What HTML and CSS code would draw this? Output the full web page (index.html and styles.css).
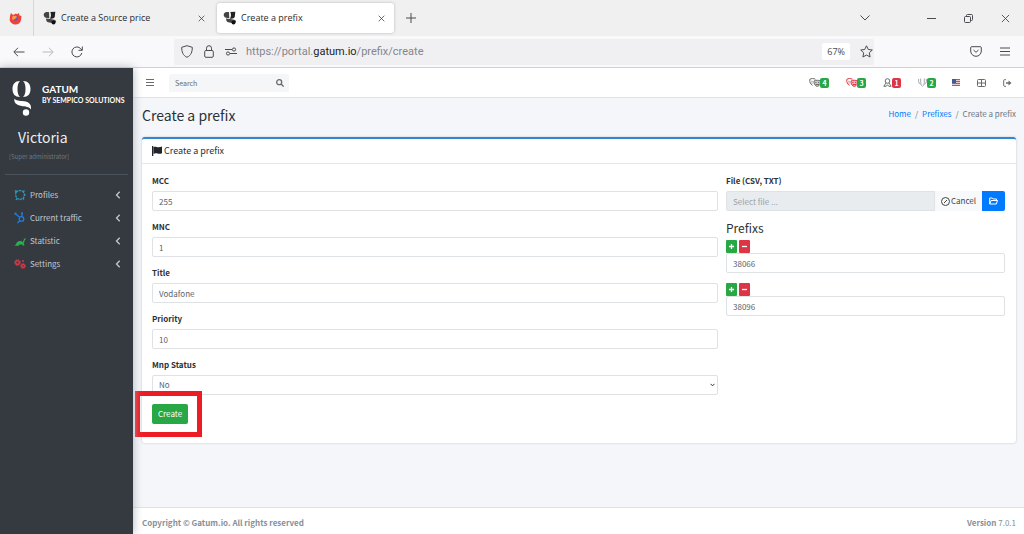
FILE: index.html
```html
<!DOCTYPE html>
<html lang="en">
<head>
<meta charset="utf-8">
<title>Create a prefix</title>
<link rel="stylesheet" href="styles.css">
</head>
<body>
<svg class="defs" aria-hidden="true">
  <symbol id="gmark" viewBox="0 0 20 36">
    <path d="M8 1C3 1 0.500 4 0.500 9s2.500 8 7.500 8C6 15 5.500 12.500 5.500 9S6 3 8 1z"/>
    <path d="M11 1c2 2 2.500 4.500 2.500 8s-.5 6-2.500 8c5 0 7.500-3 7.500-8S16 1 11 1z"/>
    <path d="M2.500 18.500c1 2 5 2.300 9.500 2.800 5 .7 7.500 3 7 8.200-2-3-5.500-2.800-9.500-3.500-5-.9-8-3.500-7-7.500z"/>
    <circle cx="14" cy="32.500" r="3.200"/>
  </symbol>
  <symbol id="favicon" viewBox="0 0 14 14">
    <path d="M.8 3C1.500 1 4 .8 6 1.200L6.300 7C3 7.400 .3 6.500.8 3z" fill="#444"/><path d="M7.300 1l5-.2-.5 5c-1 2-3 2.200-5 1.700 1.500-1.500 1.500-4 .5-6.500z" fill="#222"/>
    <path d="M3.300 7.200c3 1.300 8.200.2 9.900 3-.5 2.500-5 1.700-8 1-1.700-.5-2.400-2-1.900-4z" fill="#444"/><circle cx="10.500" cy="11.500" r="2" fill="#111"/>
  </symbol>
  <symbol id="masks" viewBox="0 0 12 9">
    <path d="M6.500 1.300C5 .3 2 .3 .8 1.300c-.3 3 .6 5 2.800 6M2.500 3.300h1M2.500 5h1"/>
    <path d="M5 3c2-1 4.500-1 6.500 0 .3 2.700-.8 4.800-3.200 5.500C5.800 7.800 4.700 5.700 5 3z" fill="currentColor" fill-opacity=".35"/><path d="M6.300 4.500h1.200M9 4.500h1.200M6.500 6.500h3.500"/>
  </symbol>
  <symbol id="x" viewBox="0 0 10 10"><path d="M1 1l8 8M9 1L1 9"/></symbol>
  <symbol id="left" viewBox="0 0 6 8"><path d="M4.700 .8L1.500 4l3.200 3.200"/></symbol>
</svg>

<header class="browser">
  <div class="tabs">
    <div class="tab-pin">
      <svg width="13" height="13" viewBox="0 0 13 13"><path d="M1 4l1-3 2 2 3-1.500 1 .8L10 1l.5 2.500L12.500 4 12 8c-.5 3-3 4.500-5.500 4.500S1 10.500.7 8z" fill="#f0413a"/><circle cx="6.300" cy="6" r="2.800" fill="#6d5bb0"/><path d="M3 5c1-1.500 4-1.800 5 0L6 7 3.500 8z" fill="#ff9a3c"/></svg>
    </div>
    <div class="tab">
      <svg class="fav"><use href="#favicon"/></svg><span>Create a Source price</span>
      <button class="ghost" aria-label="Close tab"><svg class="line i7"><use href="#x"/></svg></button>
    </div>
    <div class="tab active">
      <svg class="fav"><use href="#favicon"/></svg><span>Create a prefix</span>
      <button class="ghost" aria-label="Close tab"><svg class="line i7"><use href="#x"/></svg></button>
    </div>
    <button class="ghost new-tab" aria-label="New tab"><svg class="line" width="10" height="10" viewBox="0 0 10 10"><path d="M5 0v10M0 5h10"/></svg></button>
    <div class="window-controls">
      <button class="ghost list" aria-label="List tabs"><svg class="line" width="10" height="6" viewBox="0 0 10 6"><path d="M.5 .5L5 5 9.500 .5"/></svg></button>
      <button class="ghost" aria-label="Minimize"><svg class="line" width="9" height="9" viewBox="0 0 9 9"><path d="M0 4.500h9"/></svg></button>
      <button class="ghost" aria-label="Restore"><svg class="line" width="9" height="9" viewBox="0 0 9 9"><rect x=".5" y="2.500" width="6" height="6" rx="1"/><path d="M2.500 2.500V1.500q0-1 1-1h4q1 0 1 1v4q0 1-1 1h-1"/></svg></button>
      <button class="ghost" aria-label="Close"><svg class="line i9"><use href="#x"/></svg></button>
    </div>
  </div>
  <div class="toolbar">
    <div class="nav">
      <button class="ghost" aria-label="Back"><svg class="line" width="12" height="10" viewBox="0 0 12 10"><path d="M11.500 5H1M5 .8L.8 5 5 9.200"/></svg></button>
      <button class="ghost faded" aria-label="Forward"><svg class="line" width="12" height="10" viewBox="0 0 12 10"><path d="M.5 5H11M7 .8L11.200 5 7 9.200"/></svg></button>
      <button class="ghost" aria-label="Reload"><svg class="line" width="12" height="12" viewBox="0 0 12 12"><path d="M10.800 7A5 5 0 1 1 9.800 2.800L11 4M11.300 .5V4.300H7.500"/></svg></button>
    </div>
    <div class="address">
      <svg class="line" width="12" height="13" viewBox="0 0 12 13"><path d="M6 .7L11.300 2.300C11.300 7 10 10.500 6 12.300 2 10.500.7 7 .7 2.300z"/></svg>
      <svg class="line" width="10" height="13" viewBox="0 0 10 13"><rect x=".7" y="5.500" width="8.600" height="6.800" rx="1.200"/><path d="M2.500 5.500V3.200a2.500 2.500 0 0 1 5 0v2.300"/></svg>
      <svg class="line" width="12" height="9" viewBox="0 0 12 9"><path d="M0 2.500h7M5 6.500h7"/><circle cx="9" cy="2.500" r="1.600"/><circle cx="3" cy="6.500" r="1.600"/></svg>
      <span class="url">https://portal.<b>gatum.io</b>/prefix/create</span>
      <button class="zoom">67%</button>
      <svg class="line" width="13" height="13" viewBox="0 0 13 13"><path d="M6.500 .8l1.800 3.700 4 .5-3 2.800.8 4.200-3.600-2-3.600 2 .8-4.200-3-2.800 4-.5z"/></svg>
    </div>
    <div class="tools">
      <svg class="line" width="12" height="11" viewBox="0 0 12 11"><path d="M1.700 .7h8.600q1 0 1 1V5a5.300 5.300 0 0 1-10.600 0V1.700q0-1 1-1zM3.500 4L6 6.300 8.500 4"/></svg>
      <svg class="line" width="10" height="9" viewBox="0 0 10 9"><path d="M0 1h10M0 4.500h10M0 8h10"/></svg>
    </div>
  </div>
</header>

<div class="app">
  <aside class="sidebar">
    <a class="brand" href="#">
      <svg class="logo"><use href="#gmark"/></svg>
      <span class="brand-text"><strong>GATUM</strong><small>BY SEMPICO SOLUTIONS</small></span>
    </a>
    <div class="user"><a href="#">Victoria</a><small>[Super administrator]</small></div>
    <nav class="menu">
      <a href="#"><svg class="mi" viewBox="0 0 12 12" fill="none" stroke="#2b9bc0" stroke-width="1.300"><path d="M2 2.500L6 1.500l3 1 1.500 3L9.500 9 6 10.500 3 9.500 1.500 6z" stroke-dasharray="2.500 .7"/><path d="M1 1.500l2 2M10.500 1.500L9 3M11.500 6H10M9 9.500l1 1M3 9.500L2 11"/></svg><span>Profiles</span><svg class="line bold caret"><use href="#left"/></svg></a>
      <a href="#"><svg class="mi" viewBox="0 0 12 12" fill="none" stroke="#1c7fe0" stroke-width="1.300"><circle cx="7.500" cy="7" r="2.300"/><path d="M1 1.500l5 4M8 1v3.500M5.800 8.800L3.500 11"/><circle cx="1.500" cy="1.700" r=".5"/><circle cx="8" cy="1.300" r=".5"/></svg><span>Current traffic</span><svg class="line bold caret"><use href="#left"/></svg></a>
      <a href="#"><svg class="mi" viewBox="0 0 12 12" fill="#28b04c"><path d="M.5 10.800C2 10 2 7.500 4.500 6.300c1.800-.8 3.500-.2 4.300 1L10 4l1.200-1 .5 1.600-1 .7-1 3.700 1 1.300-1.500.5-1.200-1.300H5.500l-1 1.300z"/></svg><span>Statistic</span><svg class="line bold caret"><use href="#left"/></svg></a>
      <a href="#"><svg class="mi" viewBox="0 0 12 12" fill="none" stroke="#dc3545"><circle cx="3.500" cy="4.500" r="1.800" stroke-width="1.500"/><circle cx="3.500" cy="4.500" r="3" stroke-dasharray="1.200 1.150"/><circle cx="9" cy="8" r="1.500" stroke-width="1.400"/><circle cx="9" cy="8" r="2.500" stroke-dasharray="1 .960"/><circle cx="9" cy="3" r=".7"/></svg><span>Settings</span><svg class="line bold caret"><use href="#left"/></svg></a>
    </nav>
  </aside>

  <div class="page">
    <div class="topbar">
      <button class="ghost" aria-label="Toggle menu"><svg class="line" width="8" height="7" viewBox="0 0 8 7"><path d="M0 .5h8M0 3.500h8M0 6.500h8"/></svg></button>
      <form class="search">
        <input type="search" placeholder="Search" aria-label="Search">
        <button class="ghost" type="button" aria-label="Search"><svg class="line bold" width="8" height="8" viewBox="0 0 8 8"><circle cx="3.200" cy="3.200" r="2.500"/><path d="M5 5l2.600 2.600"/></svg></button>
      </form>
      <div class="status">
        <a href="#" aria-label="Accounts"><svg class="line si"><use href="#masks"/></svg><span class="badge">4</span></a>
        <a href="#" class="danger" aria-label="Errors"><svg class="line si"><use href="#masks"/></svg><span class="badge">3</span></a>
        <a href="#" aria-label="Users"><svg class="line si narrow" viewBox="0 0 9 9"><circle cx="4.500" cy="3" r="2.300"/><path d="M3 5L.8 8.300h2.400l1.300-1.500 1.300 1.500h2.400L6 5"/></svg><span class="badge red">1</span></a>
        <a href="#" aria-label="Routes"><svg class="line si narrow light" viewBox="0 0 9 9"><path d="M.6 1v2.500q0 2 2 2.500M2.700 .5v4q0 3 1.800 3.700 1.800-.7 1.800-3.700v-4M8.400 1v2.500q0 2-2 2.500"/></svg><span class="badge">2</span></a>
        <a href="#" class="flag" aria-label="Language"><svg width="8" height="7" viewBox="0 0 8 7"><path fill="#e9c9cd" d="M0 0h8v7H0z"/><path stroke="#c8505c" d="M0 .5h8M0 2.500h8M0 4.500h8M0 6.500h8"/><path fill="#3d5a99" d="M0 0h4v4H0z"/></svg></a>
        <a href="#" aria-label="Apps"><svg class="line" width="9" height="8" viewBox="0 0 9 8"><rect x=".5" y=".5" width="8" height="7" rx="1"/><path d="M4.500 0v8M0 4h9"/></svg></a>
        <a href="#" aria-label="Sign out"><svg class="line" width="9" height="8" viewBox="0 0 9 8"><path d="M3 .7H1.500q-.8 0-.8.8v5q0 .8.8.8H3"/><path d="M3 3.300h2.500V1.500L8.500 4 5.500 6.500V4.700H3z" fill="currentColor" stroke="none"/></svg></a>
      </div>
    </div>

    <main class="content">
      <div class="title-row">
        <h1>Create a prefix</h1>
        <nav class="crumbs"><a href="#">Home</a><i>/</i><a href="#">Prefixes</a><i>/</i><span>Create a prefix</span></nav>
      </div>
      <section class="card">
        <h2><svg width="10" height="10" viewBox="0 0 10 10"><path d="M0 0h1.300v10H0zM1.600 1c2-1 3.400.6 5 .3C8 1.200 9 .7 10 .4v6.800c-1.500.8-3 .8-4.500.3s-2.500-.4-3.900.2z" fill="#212529"/></svg>Create a prefix</h2>
        <form class="grid">
          <div class="col">
            <div class="field"><label for="mcc">MCC</label><input class="control" id="mcc" value="255"></div>
            <div class="field"><label for="mnc">MNC</label><input class="control" id="mnc" value="1"></div>
            <div class="field"><label for="title">Title</label><input class="control" id="title" value="Vodafone"></div>
            <div class="field"><label for="priority">Priority</label><input class="control" id="priority" value="10"></div>
            <div class="field"><label for="mnp">Mnp Status</label>
              <div class="select"><select class="control" id="mnp"><option>No</option><option>Yes</option></select><svg class="line" width="5" height="4" viewBox="0 0 5 4"><path d="M.5 .8l2 2 2-2"/></svg></div></div>
            <div class="submit"><button class="create" type="button">Create</button></div>
          </div>
          <div class="col">
            <div class="field"><label for="file">File (CSV, TXT)</label>
              <div class="file">
                <input class="control" id="file" placeholder="Select file ..." readonly>
                <button type="button" class="cancel"><svg class="line" width="9" height="9" viewBox="0 0 9 9"><circle cx="4.500" cy="4.500" r="4"/><path d="M3 6l3-3"/></svg>Cancel</button>
                <button type="button" class="browse" aria-label="Browse"><svg class="line" width="9" height="8" viewBox="0 0 9 8"><path d="M.7 7V1h2.500l1 1h3.300v1.500M.7 7l1.300-3.500h6.500L7.300 7z"/></svg></button>
              </div></div>
            <h3>Prefixs</h3>
            <div class="prefix">
              <div class="pm"><button type="button" class="add" aria-label="Add"><svg class="line bold" width="5" height="5" viewBox="0 0 5 5"><path d="M2.500 0v5M0 2.500h5"/></svg></button><button type="button" class="remove" aria-label="Remove"><svg class="line bold" width="5" height="5" viewBox="0 0 5 5"><path d="M0 2.500h5"/></svg></button></div>
              <input class="control" aria-label="Prefix 1" value="38066">
            </div>
            <div class="prefix">
              <div class="pm"><button type="button" class="add" aria-label="Add"><svg class="line bold" width="5" height="5" viewBox="0 0 5 5"><path d="M2.500 0v5M0 2.500h5"/></svg></button><button type="button" class="remove" aria-label="Remove"><svg class="line bold" width="5" height="5" viewBox="0 0 5 5"><path d="M0 2.500h5"/></svg></button></div>
              <input class="control" aria-label="Prefix 2" value="38096">
            </div>
          </div>
        </form>
      </section>
    </main>
    <footer class="footer"><strong>Copyright © Gatum.io. All rights reserved</strong><span><b>Version</b> 7.0.1</span></footer>
  </div>
</div>
</body>
</html>
```

FILE: styles.css
```css
* { box-sizing: border-box; }
body {
  margin: 0; min-height: 100vh; display: flex; flex-direction: column;
  font: 8px/12px "Noto Sans CJK SC", "Open Sans", sans-serif; color: #2c3136;
}
button, input, select { font: inherit; color: inherit; margin: 0; }
button { cursor: pointer; }
a { color: inherit; text-decoration: none; }
svg { flex: none; display: block; }
.defs { position: absolute; width: 0; height: 0; }
.line { fill: none; stroke: currentColor; stroke-width: 1; }
.bold { stroke-width: 1.3; }
.ghost { border: 0; background: none; padding: 0; display: grid; place-items: center; }
.i7 { width: 7px; height: 7px; }
.i9 { width: 9px; height: 9px; }

/* Browser frame */
.browser { font-family: "Open Sans", "Noto Sans", sans-serif; border-bottom: 1px solid #cfd0d6; color: #4a4a51; }
.tabs { display: flex; align-items: center; height: 36px; background: #f0f0f1; }
.tab-pin { width: 34px; height: 36px; display: grid; place-items: center; padding-right: 3px; border-right: 1px solid #d6d6d9; }
.tab { display: flex; align-items: center; gap: 4px; width: 177px; height: 30px; margin-left: 3px; padding: 0 9px 0 6px; border-radius: 3px; font-size: 9px; color: #2b2b30; }
.tab.active { background: #fff; box-shadow: 0 0 3px #b4b4b8; }
.tab .ghost { margin-left: auto; }
.fav { width: 14px; height: 14px; }
.new-tab { margin-left: 12px; }
.window-controls { margin-left: auto; display: flex; align-items: center; gap: 28px; padding-right: 14px; }
.list { margin-right: 29px; }
.toolbar { display: flex; align-items: center; height: 31px; background: #f9f9fb; }
.nav { display: flex; gap: 17px; padding-left: 13px; width: 174px; }
.faded { color: #b9b9bf; }
.address { display: flex; align-items: center; gap: 11px; flex: 1; height: 26px; padding-left: 7px; background: #f0f0f3; border-radius: 2px; }
.url { flex: 1; margin-left: -2px; font-family: Roboto, sans-serif; font-size: 11px; color: #85858c; }
.url b { font-weight: 400; color: #1c1c22; }
.zoom { border: 0; border-radius: 2px; background: #fff; height: 17px; padding: 0 5px; font-size: 9px; }
.address .zoom + svg { margin: 0 1px 0 -1px; }
.tools { display: flex; align-items: center; gap: 18px; padding: 0 14px 0 96px; }

/* Sidebar */
.app { flex: 1; display: flex; }
.sidebar { width: 133px; flex: none; background: #343a40; color: #c2c7d0; box-shadow: 0 0 9px #adb3ba; z-index: 1; }
.brand { display: flex; align-items: flex-start; gap: 10px; padding: 12px 10px 0 12px; height: 56px; color: #fff; }
.logo { width: 20px; height: 36px; fill: #fff; }
.brand-text { font-family: Lato, "Open Sans", sans-serif; display: grid; padding-top: 4px; white-space: nowrap; }
.brand-text strong { font-size: 10px; line-height: 11px; }
.brand-text small { font-size: 7px; line-height: 10px; font-weight: 700; }
.user { display: grid; gap: 5px; margin: 0 5px; padding: 4px 4px 11px; border-bottom: 1px solid #4b545c; }
.user a { font-size: 14px; line-height: 18px; padding-left: 9px; color: #eceff2; }
.user small { font-size: 6px; line-height: 12px; color: #6f7880; }
.menu { padding-top: 8px; }
.menu a { display: flex; align-items: center; gap: 4px; height: 23px; padding: 0 12px 0 14px; }
.mi { width: 12px; height: 12px; }
.menu span { flex: 1; }
.caret { width: 6px; height: 8px; }

/* Page */
.page { flex: 1; display: flex; flex-direction: column; min-width: 0; background: #f4f6f9; }
.topbar { display: flex; align-items: center; height: 30px; padding: 0 12px 0 13px; background: #fff; border-bottom: 1px solid #dee2e6; color: #6b6b6b; }
.search { display: flex; margin-left: 15px; width: 120px; height: 18px; background: #f5f6f7; border-radius: 2px; padding: 0 5px 0 6px; }
.search input { flex: 1; min-width: 0; border: 0; padding: 0; background: none; font-size: 7px; outline: 0; }
.search input::placeholder { color: #6b6b6b; }
.status { display: flex; align-items: center; gap: 17px; margin-left: auto; }
.status a { display: flex; align-items: center; }
.si { width: 12px; height: 9px; margin-right: -1px; }
.si.narrow { width: 9px; margin-right: 0; }
.light { color: #a4a8ac; }
.danger { color: #dc3545; }
.badge { min-width: 9px; height: 10px; padding: 0 2px; border-radius: 2px; background: #28a745; color: #fff; font-size: 7px; line-height: 10px; font-weight: 700; text-align: center; }
.badge.red { background: #dc3545; }
.flag { margin-left: -1px; }
.content { flex: 1; padding: 8px 8px 8px 9px; }
.title-row { display: flex; justify-content: space-between; height: 31px; }
h1, h2, h3 { margin: 0; font-weight: 400; }
h1 { font-size: 14px; line-height: 18px; }
.crumbs { display: flex; gap: 4px; line-height: 16px; color: #6c757d; }
.crumbs a { color: #007bff; }
.crumbs i { font-style: normal; }
.card { background: #fff; border-top: 2px solid #3088d4; border-radius: 3px; box-shadow: 0 0 2px #b5bbc2; padding-bottom: 19px; }
h2 { display: flex; align-items: center; gap: 2px; height: 25px; padding: 0 10px; font-size: 9px; border-bottom: 1px solid #e6e8ea; }
.grid { display: grid; grid-template-columns: 2fr 1fr; padding: 11px 7px 0 6px; }
.col { padding: 0 4px; min-width: 0; }
.field { display: grid; gap: 4px; margin-bottom: 10px; }
.field label { font-weight: 700; line-height: 12px; }
.control { width: 100%; min-width: 0; height: 20px; padding: 0 6px; border: 1px solid #dfe2e5; border-radius: 2px; background: #fff; color: #5b6269; }
.select { position: relative; }
select.control { appearance: none; }
.select svg { position: absolute; right: 3px; top: 8px; }
.submit { position: relative; width: max-content; margin-top: -1px; }
.submit::after { content: ""; position: absolute; inset: -13px -14px -13px -17px; border: 5px solid #ed1c24; pointer-events: none; }
.create { display: block; height: 20px; padding: 0 6px; border: 0; border-radius: 2px; background: #28a745; color: #fff; }
.file { display: flex; }
.file .control { flex: 1; background: #e9ecef; border-radius: 2px 0 0 2px; }
.file .control::placeholder { color: #9aa1a8; }
.cancel { display: flex; align-items: center; gap: 1px; height: 20px; padding: 0 6px; border: 0; background: #f8f9fa; color: #444; }
.browse { display: grid; place-items: center; width: 23px; height: 20px; padding: 0; border: 0; border-radius: 0 2px 2px 0; background: #007bff; color: #fff; }
h3 { font-size: 12px; line-height: 13px; margin-bottom: 6px; }
.prefix { margin-bottom: 10px; }
.pm { display: flex; gap: 2px; }
.pm button { display: grid; place-items: center; width: 11px; height: 13px; padding: 0; border: 0; border-radius: 1px; color: #fff; }
.pm .add { background: #28a745; }
.pm .remove { background: #dc3545; }
.footer { display: flex; justify-content: space-between; align-items: center; height: 27px; padding: 4px 8px 0 9px; background: #fff; border-top: 1px solid #dee2e6; color: #869099; }
```
